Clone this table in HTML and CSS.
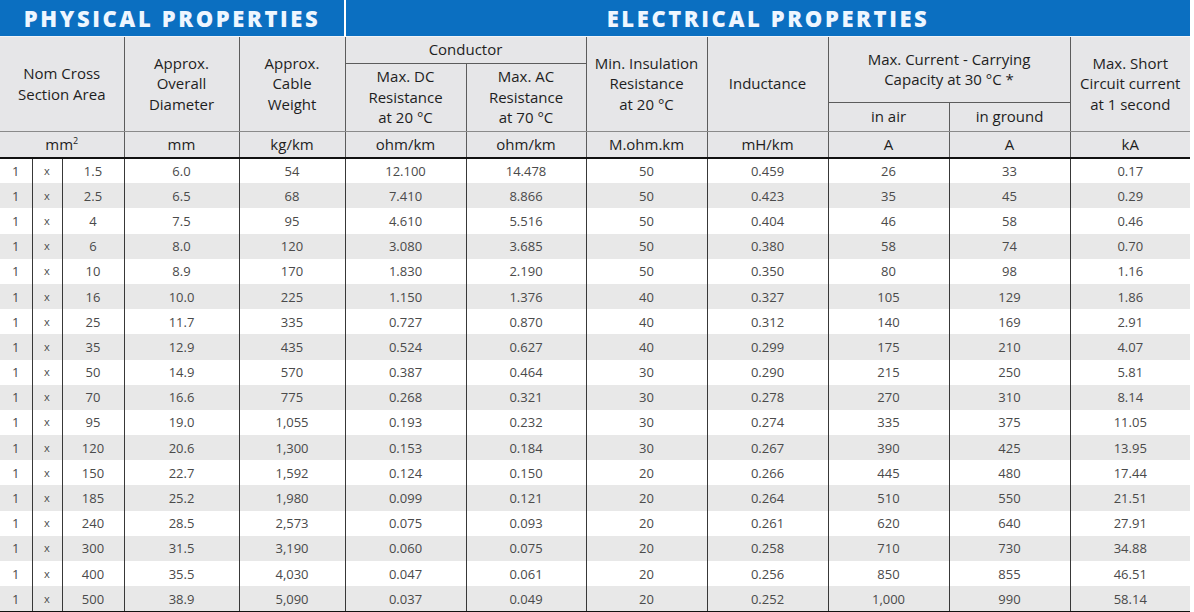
FILE: index.html
```html
<!DOCTYPE html>
<html lang="en">
<head>
<meta charset="utf-8">
<title>Cable Properties</title>
<link rel="stylesheet" href="styles.css">
</head>
<body>
<table class="spec">
  <colgroup>
    <col class="c-n"><col class="c-x"><col class="c-size">
    <col class="c-dia"><col class="c-wt">
    <col class="c-dc"><col class="c-ac"><col class="c-ins"><col class="c-ind">
    <col class="c-air"><col class="c-gnd"><col class="c-ka">
  </colgroup>
  <thead>
    <tr class="band">
      <th colspan="5" class="band-cell">PHYSICAL PROPERTIES</th>
      <th colspan="7" class="band-cell band-elec">ELECTRICAL PROPERTIES</th>
    </tr>
    <tr class="h1">
      <th colspan="3" rowspan="3" class="hd first">Nom Cross<br>Section Area</th>
      <th rowspan="3" class="hd">Approx.<br>Overall<br>Diameter</th>
      <th rowspan="3" class="hd">Approx.<br>Cable<br>Weight</th>
      <th colspan="2" class="hd sub">Conductor</th>
      <th rowspan="3" class="hd">Min. Insulation<br>Resistance<br>at 20 °C</th>
      <th rowspan="3" class="hd">Inductance</th>
      <th colspan="2" rowspan="2" class="hd sub">Max. Current - Carrying<br>Capacity at 30 °C *</th>
      <th rowspan="3" class="hd last">Max. Short<br>Circuit current<br>at 1 second</th>
    </tr>
    <tr class="h2">
      <th rowspan="2" class="hd">Max. DC<br>Resistance<br>at 20 °C</th>
      <th rowspan="2" class="hd">Max. AC<br>Resistance<br>at 70 °C</th>
    </tr>
    <tr class="h3">
      <th class="hd">in air</th>
      <th class="hd">in ground</th>
    </tr>
    <tr class="units">
      <th colspan="3" class="un first">mm<sup>2</sup></th>
      <th class="un">mm</th>
      <th class="un">kg/km</th>
      <th class="un">ohm/km</th>
      <th class="un">ohm/km</th>
      <th class="un">M.ohm.km</th>
      <th class="un">mH/km</th>
      <th class="un">A</th>
      <th class="un">A</th>
      <th class="un last">kA</th>
    </tr>
  </thead>
  <tbody>
    <tr><td>1</td><td class="x">x</td><td>1.5</td><td>6.0</td><td>54</td><td>12.100</td><td>14.478</td><td>50</td><td>0.459</td><td>26</td><td>33</td><td>0.17</td></tr>
    <tr><td>1</td><td class="x">x</td><td>2.5</td><td>6.5</td><td>68</td><td>7.410</td><td>8.866</td><td>50</td><td>0.423</td><td>35</td><td>45</td><td>0.29</td></tr>
    <tr><td>1</td><td class="x">x</td><td>4</td><td>7.5</td><td>95</td><td>4.610</td><td>5.516</td><td>50</td><td>0.404</td><td>46</td><td>58</td><td>0.46</td></tr>
    <tr><td>1</td><td class="x">x</td><td>6</td><td>8.0</td><td>120</td><td>3.080</td><td>3.685</td><td>50</td><td>0.380</td><td>58</td><td>74</td><td>0.70</td></tr>
    <tr><td>1</td><td class="x">x</td><td>10</td><td>8.9</td><td>170</td><td>1.830</td><td>2.190</td><td>50</td><td>0.350</td><td>80</td><td>98</td><td>1.16</td></tr>
    <tr><td>1</td><td class="x">x</td><td>16</td><td>10.0</td><td>225</td><td>1.150</td><td>1.376</td><td>40</td><td>0.327</td><td>105</td><td>129</td><td>1.86</td></tr>
    <tr><td>1</td><td class="x">x</td><td>25</td><td>11.7</td><td>335</td><td>0.727</td><td>0.870</td><td>40</td><td>0.312</td><td>140</td><td>169</td><td>2.91</td></tr>
    <tr><td>1</td><td class="x">x</td><td>35</td><td>12.9</td><td>435</td><td>0.524</td><td>0.627</td><td>40</td><td>0.299</td><td>175</td><td>210</td><td>4.07</td></tr>
    <tr><td>1</td><td class="x">x</td><td>50</td><td>14.9</td><td>570</td><td>0.387</td><td>0.464</td><td>30</td><td>0.290</td><td>215</td><td>250</td><td>5.81</td></tr>
    <tr><td>1</td><td class="x">x</td><td>70</td><td>16.6</td><td>775</td><td>0.268</td><td>0.321</td><td>30</td><td>0.278</td><td>270</td><td>310</td><td>8.14</td></tr>
    <tr><td>1</td><td class="x">x</td><td>95</td><td>19.0</td><td>1,055</td><td>0.193</td><td>0.232</td><td>30</td><td>0.274</td><td>335</td><td>375</td><td>11.05</td></tr>
    <tr><td>1</td><td class="x">x</td><td>120</td><td>20.6</td><td>1,300</td><td>0.153</td><td>0.184</td><td>30</td><td>0.267</td><td>390</td><td>425</td><td>13.95</td></tr>
    <tr><td>1</td><td class="x">x</td><td>150</td><td>22.7</td><td>1,592</td><td>0.124</td><td>0.150</td><td>20</td><td>0.266</td><td>445</td><td>480</td><td>17.44</td></tr>
    <tr><td>1</td><td class="x">x</td><td>185</td><td>25.2</td><td>1,980</td><td>0.099</td><td>0.121</td><td>20</td><td>0.264</td><td>510</td><td>550</td><td>21.51</td></tr>
    <tr><td>1</td><td class="x">x</td><td>240</td><td>28.5</td><td>2,573</td><td>0.075</td><td>0.093</td><td>20</td><td>0.261</td><td>620</td><td>640</td><td>27.91</td></tr>
    <tr><td>1</td><td class="x">x</td><td>300</td><td>31.5</td><td>3,190</td><td>0.060</td><td>0.075</td><td>20</td><td>0.258</td><td>710</td><td>730</td><td>34.88</td></tr>
    <tr><td>1</td><td class="x">x</td><td>400</td><td>35.5</td><td>4,030</td><td>0.047</td><td>0.061</td><td>20</td><td>0.256</td><td>850</td><td>855</td><td>46.51</td></tr>
    <tr><td>1</td><td class="x">x</td><td>500</td><td>38.9</td><td>5,090</td><td>0.037</td><td>0.049</td><td>20</td><td>0.252</td><td>1,000</td><td>990</td><td>58.14</td></tr>
  </tbody>
</table>
</body>
</html>
```

FILE: styles.css
```css
html, body {
  margin: 0;
  padding: 0;
  background: #ffffff;
}

body {
  font-family: "Open Sans", "Liberation Sans", sans-serif;
  color: #222;
}

.spec {
  border-collapse: collapse;
  table-layout: fixed;
  width: 1190px;
}

.c-n { width: 32px; }
.c-x { width: 30px; }
.c-size { width: 62px; }
.c-dia { width: 115px; }
.c-wt { width: 106px; }
.c-dc { width: 121px; }
.c-ac { width: 120px; }
.c-ins { width: 121px; }
.c-ind { width: 121px; }
.c-air { width: 121px; }
.c-gnd { width: 121px; }
.c-ka { width: 120px; }

th, td {
  padding: 0;
  text-align: center;
  vertical-align: middle;
}

/* blue band */
.band { height: 36px; }
.band-cell {
  background: #0b6fc1;
  color: #eef6ff;
  font-family: "Open Sans", "Liberation Sans", sans-serif;
  font-weight: 800;
  font-size: 22px;
  letter-spacing: 2.6px;
  line-height: 34px;
  border-bottom: 1px solid #f2f4f7;
}
.band-elec { border-left: 2px solid #ffffff; }

/* header */
.h1 { height: 27px; }
.h2 { height: 39px; }
.h3 { height: 29px; }
.units { height: 27px; }

.hd, .un {
  background: #e6e6e8;
  font-weight: 400;
  font-size: 15px;
  line-height: 20.5px;
  color: #1e1e1e;
  border-left: 1px solid #5c5c5c;
  border-bottom: 1px solid #8a8a8a;
}
.hd.sub { border-bottom-color: #5c5c5c; }
.first { border-left: none; }

.un {
  font-size: 15px;
  border-bottom: 2px solid #111;
}
.un sup {
  font-size: 9px;
  line-height: 0;
  vertical-align: 6px;
}

/* data */
tbody tr { height: 25.2px; }
tbody tr:nth-child(even) td { background: #e8e8e8; }
tbody tr:last-child td { border-bottom: 1px solid #111; }

td {
  font-size: 13px;
  line-height: 16px;
  color: #4a4a4a;
  border-left: 1px solid #383838;
}
td:first-child { border-left: none; }
td.x { font-size: 11px; }
```
